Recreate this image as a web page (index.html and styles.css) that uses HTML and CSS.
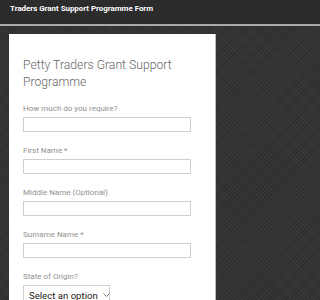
FILE: index.html
```html
<!DOCTYPE html>
<html>
<head>
<meta charset="utf-8">
<link rel="stylesheet" href="styles.css">
</head>
<body>
<header class="topbar">Traders Grant Support Programme Form</header>
<main class="page">
  <section class="card">
    <h1 class="title">Petty Traders Grant Support Programme</h1>
    <div class="field">
      <label class="label">How much do you require?</label>
      <input class="input" type="text">
    </div>
    <div class="field">
      <label class="label">First Name *</label>
      <input class="input" type="text">
    </div>
    <div class="field">
      <label class="label">Middle Name (Optional)</label>
      <input class="input" type="text">
    </div>
    <div class="field">
      <label class="label">Surname Name *</label>
      <input class="input" type="text">
    </div>
    <div class="field">
      <label class="label">State of Origin?</label>
      <div class="select">
        <span class="select-text">Select an option</span>
        <svg class="chev" width="7" height="4" viewBox="0 0 7 4"><path d="M0.5 0.5 L3.5 3.5 L6.5 0.5" fill="none" stroke="#666" stroke-width="0.9"/></svg>
      </div>
    </div>
  </section>
</main>
</body>
</html>
```
FILE: styles.css
```css
html, body {
  margin: 0;
  padding: 0;
}
body {
  font-family: Roboto, "Liberation Sans", sans-serif;
  background-color: #333;
  background-image: repeating-linear-gradient(45deg, rgba(255,255,255,0.03) 0 1px, transparent 1px 3px),
                    repeating-linear-gradient(-45deg, rgba(0,0,0,0.12) 0 1px, transparent 1px 3px);
  height: 300px;
  overflow: hidden;
}
.topbar {
  height: 26px;
  box-sizing: border-box;
  background: #2c2c2c;
  border-bottom: 2px solid #a9a9a9;
  color: #fff;
  font-weight: bold;
  font-size: 7.9px;
  line-height: 17px;
  padding-left: 10px;
  white-space: nowrap;
}
.page {
  padding: 8px 0 0 9px;
}
.card {
  width: 207px;
  background: #fff;
  border-right: 1px solid #bbb;
  padding: 23px 0 30px 14px;
  box-sizing: border-box;
  min-height: 300px;
}
.title {
  margin: 0 0 12px 0;
  font-weight: 300;
  font-size: 12.2px;
  line-height: 17px;
  color: #666;
  width: 170px;
}
.field {
  margin-bottom: 13px;
}
.label {
  display: block;
  font-size: 8px;
  color: #909090;
  line-height: 12px;
  margin-bottom: 2px;
}
.input {
  display: block;
  width: 168px;
  height: 15px;
  box-sizing: border-box;
  border: 1px solid #cfcfcf;
  margin: 0;
  padding: 0;
  background: #fff;
}
.select {
  display: flex;
  align-items: center;
  gap: 5px;
  width: 87px;
  height: 20px;
  box-sizing: border-box;
  border: 1px solid #d0d0d0;
  padding-left: 5px;
  font-size: 9.6px;
  color: #222;
  white-space: nowrap;
}
.chev {
  display: block;
  flex: none;
}
```
